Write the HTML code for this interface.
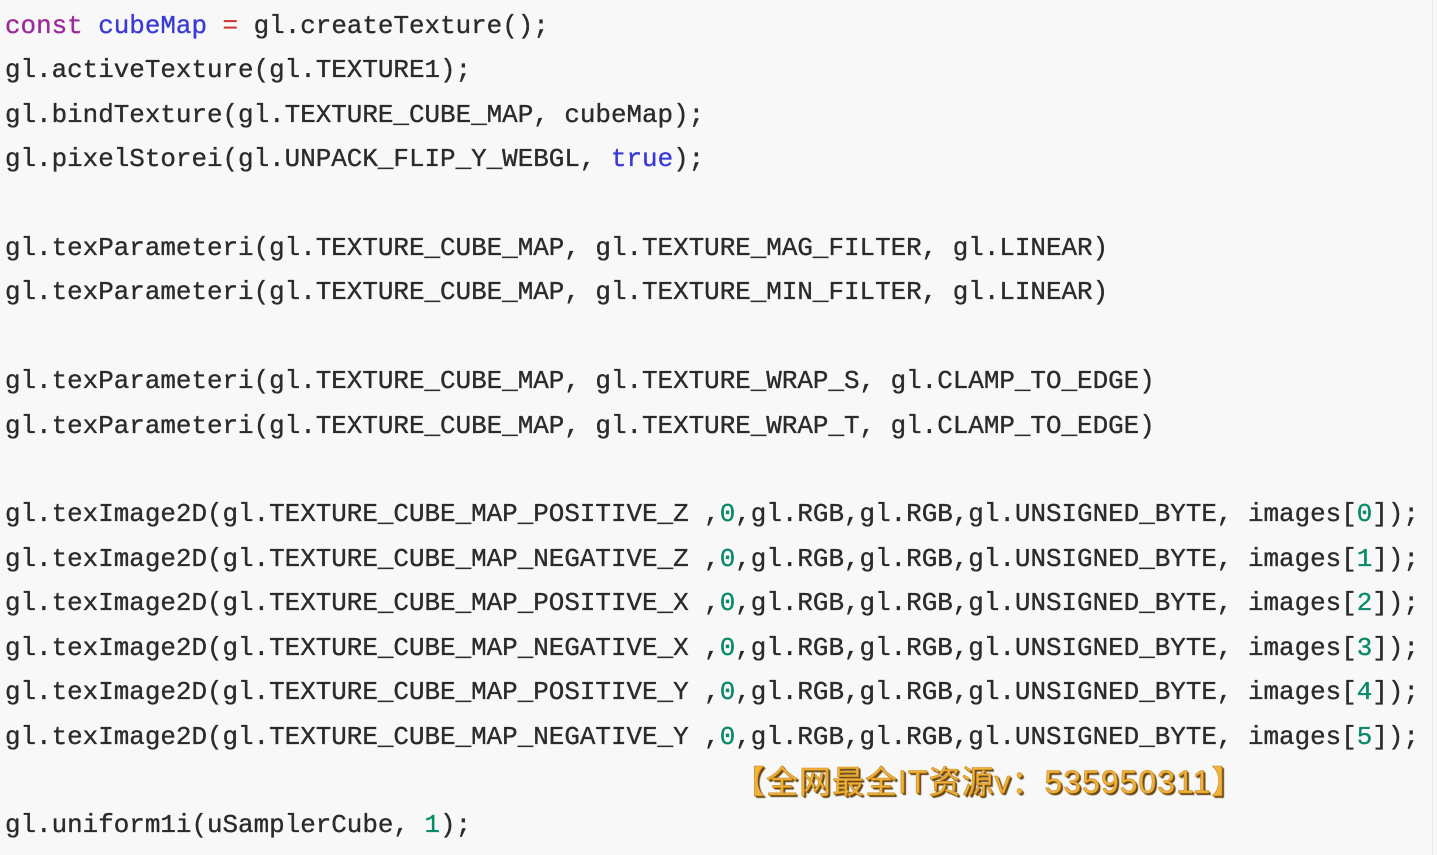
<!DOCTYPE html>
<html><head><meta charset="utf-8"><style>
html,body{margin:0;padding:0;background:#f8f8f8;width:1437px;height:855px;overflow:hidden}
pre{margin:0;position:absolute;left:5px;top:4px;font-family:"Liberation Mono",monospace;font-size:25.9px;line-height:44.4px;color:#2b2b2b;letter-spacing:0;-webkit-text-stroke:0.35px currentColor}
.k{color:#9b2a9b}.b{color:#3a3ad8}.r{color:#d03838}.n{color:#0a8a6a}
.wm{position:absolute;left:733px;top:757px;font-family:"Liberation Sans","Noto Sans CJK SC",sans-serif;font-weight:normal;font-size:32px;color:#f0b23c;-webkit-text-stroke:0.6px #c88a20;text-shadow:1px 1px 0 #7a5010,2px 2px 1px #5a3a08;white-space:nowrap;letter-spacing:1px}
.edge{position:absolute;right:4px;top:0;width:1px;height:855px;background:#ececec}
</style></head><body>
<div class="edge"></div>
<pre><span class="k">const</span> <span class="b">cubeMap</span> <span class="r">=</span> gl.createTexture();
gl.activeTexture(gl.TEXTURE1);
gl.bindTexture(gl.TEXTURE_CUBE_MAP, cubeMap);
gl.pixelStorei(gl.UNPACK_FLIP_Y_WEBGL, <span class="b">true</span>);

gl.texParameteri(gl.TEXTURE_CUBE_MAP, gl.TEXTURE_MAG_FILTER, gl.LINEAR)
gl.texParameteri(gl.TEXTURE_CUBE_MAP, gl.TEXTURE_MIN_FILTER, gl.LINEAR)

gl.texParameteri(gl.TEXTURE_CUBE_MAP, gl.TEXTURE_WRAP_S, gl.CLAMP_TO_EDGE)
gl.texParameteri(gl.TEXTURE_CUBE_MAP, gl.TEXTURE_WRAP_T, gl.CLAMP_TO_EDGE)

gl.texImage2D(gl.TEXTURE_CUBE_MAP_POSITIVE_Z ,<span class="n">0</span>,gl.RGB,gl.RGB,gl.UNSIGNED_BYTE, images[<span class="n">0</span>]);
gl.texImage2D(gl.TEXTURE_CUBE_MAP_NEGATIVE_Z ,<span class="n">0</span>,gl.RGB,gl.RGB,gl.UNSIGNED_BYTE, images[<span class="n">1</span>]);
gl.texImage2D(gl.TEXTURE_CUBE_MAP_POSITIVE_X ,<span class="n">0</span>,gl.RGB,gl.RGB,gl.UNSIGNED_BYTE, images[<span class="n">2</span>]);
gl.texImage2D(gl.TEXTURE_CUBE_MAP_NEGATIVE_X ,<span class="n">0</span>,gl.RGB,gl.RGB,gl.UNSIGNED_BYTE, images[<span class="n">3</span>]);
gl.texImage2D(gl.TEXTURE_CUBE_MAP_POSITIVE_Y ,<span class="n">0</span>,gl.RGB,gl.RGB,gl.UNSIGNED_BYTE, images[<span class="n">4</span>]);
gl.texImage2D(gl.TEXTURE_CUBE_MAP_NEGATIVE_Y ,<span class="n">0</span>,gl.RGB,gl.RGB,gl.UNSIGNED_BYTE, images[<span class="n">5</span>]);

gl.uniform1i(uSamplerCube, <span class="n">1</span>);</pre>
<div class="wm">【全网最全IT资源v：535950311】</div>
</body></html>
